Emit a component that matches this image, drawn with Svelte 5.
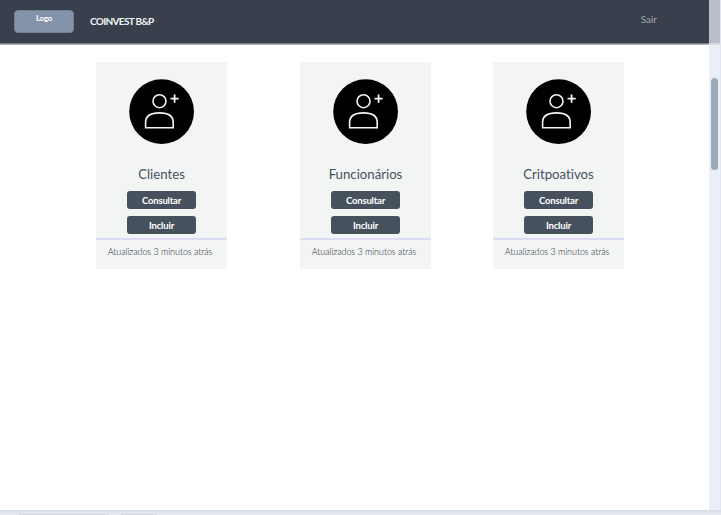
<script>
  const cards = ['Clientes', 'Funcionários', 'Critpoativos'];
</script>

<div class="window">
  <div class="view">
    <div class="page">
      <header>
        <div class="logo"><span>Logo</span></div>
        <strong>COINVEST B&amp;P</strong>
        <a href="#sair">Sair</a>
      </header>
      <main>
        {#each cards as title}
          <article>
            <svg width="66" height="66" viewBox="0 0 66 66">
              <circle cx="32.6" cy="32.6" r="32.4" fill="#000" />
              <g fill="none" stroke="#f3f5f4" stroke-width="1.6">
                <circle cx="30.5" cy="22.2" r="6.5" />
                <path d="M16.6 48.8V43.5C16.6 37 22.1 33.9 30.5 33.9S44.2 37 44.2 43.5V48.8Z" />
                <path d="M45.6 15.5V23.7M41.5 19.6H49.7" stroke-width="1.8" />
              </g>
            </svg>
            <h2>{title}</h2>
            <button>Consultar</button>
            <button>Incluir</button>
            <footer><span>Atualizados 3 minutos atrás</span></footer>
          </article>
        {/each}
      </main>
    </div>
    <aside><div class="thumb"></div></aside>
  </div>
  <div class="bottom"><i></i><i></i></div>
</div>

<style>
  .window {
    width: 721px;
    height: 515px;
    overflow: hidden;
    display: flex;
    flex-direction: column;
    background: #e9edf5;
    font-family: Lato, sans-serif;
    font-variant-ligatures: none;
    color: #47515d;
  }
  .view { display: flex; height: 510px; flex: none; }
  .page { width: 709px; background: #fff; }
  header {
    box-sizing: border-box;
    height: 45px;
    display: flex;
    align-items: flex-start;
    background: linear-gradient(#37404c 43px, #747c86 43px, #747c86 44px, #b5bac0 44px);
    padding: 10px 52px 0 14px;
  }
  .logo {
    box-sizing: border-box;
    width: 60px;
    height: 23px;
    border: 1px solid #748398;
    border-radius: 4px;
    background: #8493a9;
    color: #fff;
    text-align: center;
    font-size: 8px;
    line-height: 14px;
    font-weight: 700;
    letter-spacing: -0.3px;
  }
  strong {
    margin-left: 16px;
    color: #f2f4f6;
    font-size: 10px;
    line-height: 22px;
    letter-spacing: -0.66px;
  }
  a {
    margin-left: auto;
    color: #a2a9b2;
    font-size: 10px;
    line-height: 18px;
    text-decoration: none;
  }
  main { display: flex; padding: 17px 0 0 96px; }
  article {
    width: 131px;
    height: 207px;
    display: flex;
    flex-direction: column;
    align-items: center;
    background: #f2f5f4;
  }
  article:nth-child(2) { margin: 0 62px 0 73px; }
  svg { margin-top: 17px; flex: none; }
  h2 {
    margin: 20px 0 6px;
    font-size: 13.2px;
    line-height: 18px;
    font-weight: 400;
  }
  button {
    width: 69px;
    height: 18px;
    margin: 2px 0 5px;
    padding: 1px 0 0;
    border: 0;
    border-radius: 3px;
    background: #47515e;
    color: #fff;
    font: 700 9.5px/17px Lato, sans-serif;
    letter-spacing: -0.2px;
  }
  footer {
    box-sizing: border-box;
    width: 100%;
    margin-top: -1px;
    border-top: 2px solid #dcdbf4;
    color: #1d2733;
    text-align: center;
    font-size: 9px;
    line-height: 24px;
    font-weight: 300;
    letter-spacing: -0.07px;
    text-indent: -3px;
    white-space: nowrap;
  }
  aside {
    box-sizing: border-box;
    width: 12px;
    padding: 78px 3px 0 2px;
    background: linear-gradient(#b8bfca 43px, #d6dae3 43px, #d6dae3 45px, #eaeef6 45px);
    border-right: 1px solid #e1e6ef;
  }
  .thumb {
    width: 7px;
    height: 92px;
    border-radius: 4px;
    background: #9ca9b8;
  }
  .bottom {
    height: 5px;
    box-sizing: border-box;
    display: flex;
    align-items: flex-end;
    gap: 12px;
    padding-left: 19px;
    background: linear-gradient(#d3dbe5, #e0e5ed 50%, #e9edf3);
  }
  i { width: 90px; height: 1px; background: #d5d8df; }
  i:last-child { width: 36px; }
</style>
